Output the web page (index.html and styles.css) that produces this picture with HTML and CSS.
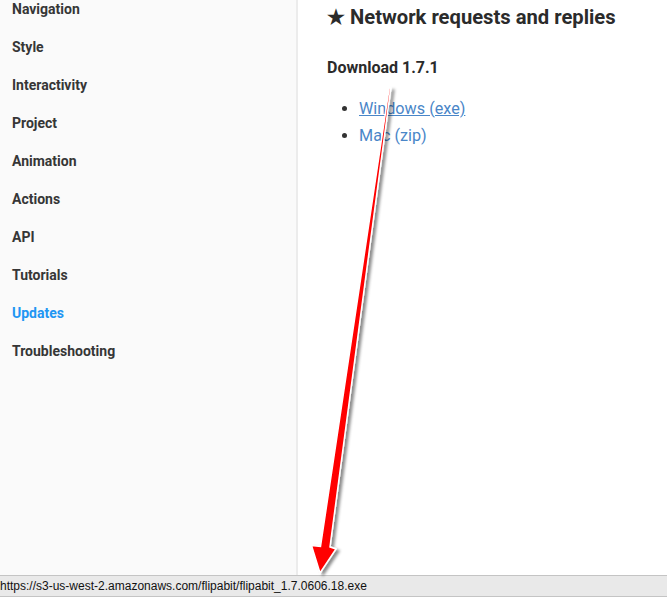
FILE: index.html
```html
<!DOCTYPE html>
<html>
<head>
<meta charset="utf-8">
<link rel="stylesheet" href="styles.css">
</head>
<body>
<div class="page">
  <aside class="sidebar">
    <ul class="nav">
      <li>Navigation</li>
      <li>Style</li>
      <li>Interactivity</li>
      <li>Project</li>
      <li>Animation</li>
      <li>Actions</li>
      <li>API</li>
      <li>Tutorials</li>
      <li class="active">Updates</li>
      <li>Troubleshooting</li>
    </ul>
  </aside>
  <main class="content">
    <h2 class="title">★ Network requests and replies</h2>
    <h3 class="sub">Download 1.7.1</h3>
    <ul class="links">
      <li><a class="hover" href="#">Windows (exe)</a></li>
      <li><a href="#">Mac (zip)</a></li>
    </ul>
  </main>
</div>
<div class="status">https://s3-us-west-2.amazonaws.com/flipabit/flipabit_1.7.0606.18.exe</div>
<svg class="arrow" width="667" height="597" viewBox="0 0 667 597">
  <defs>
    <filter id="sh" x="-50%" y="-10%" width="200%" height="120%">
      <feDropShadow dx="3" dy="2" stdDeviation="1.8" flood-color="#000" flood-opacity="0.45"/>
    </filter>
  </defs>
  <polygon filter="url(#sh)" points="389.2,88 390.8,88 330,547 336,549 320,573 311.5,545.5 320.5,546.5" fill="#ff0000" stroke="#ffffff" stroke-width="1.5" stroke-linejoin="miter"/>
</svg>
</body>
</html>
```
FILE: styles.css
```css
html, body {
  margin: 0;
  padding: 0;
  background: #ffffff;
  overflow: hidden;
}
body {
  width: 667px;
  height: 597px;
  position: relative;
  font-family: Roboto, "Liberation Sans", sans-serif;
}
.page {
  display: flex;
  height: 575px;
  overflow: hidden;
}
.sidebar {
  width: 296px;
  background: #fafafa;
  border-right: 2px solid #ececec;
  flex-shrink: 0;
}
.nav {
  list-style: none;
  margin: -10px 0 0 0;
  padding: 0 0 0 12px;
}
.nav li {
  height: 38px;
  line-height: 38px;
  font-size: 14px;
  font-weight: 700;
  color: #363636;
}
.nav li.active {
  color: #2196f3;
}
.content {
  flex: 1;
  padding-left: 29px;
}
.title {
  margin: 3px 0 0 0;
  font-size: 20.2px;
  line-height: 28px;
  font-weight: 700;
  color: #2b2b2b;
}
.sub {
  margin: 27px 0 0 0;
  font-size: 16px;
  line-height: 20px;
  font-weight: 700;
  color: #2b2b2b;
}
.links {
  margin: 17px 0 0 0;
  padding-left: 32px;
  font-size: 16.2px;
}
.links li {
  line-height: 27px;
  color: #333;
}
.links a {
  color: #4a86c8;
  text-decoration: none;
}
.links a.hover {
  text-decoration: underline;
}
.status {
  height: 20px;
  line-height: 20px;
  background: #e9e9e9;
  border-top: 1px solid #c4c4c4;
  border-bottom: 1px solid #c4c4c4;
  padding-left: 0;
  font-family: "Liberation Sans", Arial, sans-serif;
  font-size: 12px;
  color: #111;
  white-space: nowrap;
}
.arrow {
  position: absolute;
  left: 0;
  top: 0;
  pointer-events: none;
}
```
